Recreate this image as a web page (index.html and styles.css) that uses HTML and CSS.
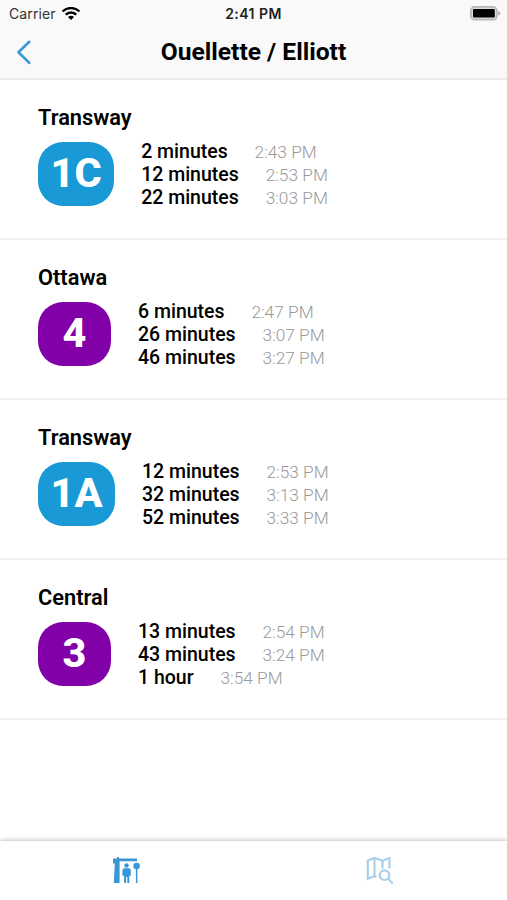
FILE: index.html
```
<!DOCTYPE html>
<html lang="en">
<head>
    <meta charset="UTF-8">
    <meta name="viewport" content="width=device-width, initial-scale=1.0">
    <title>Ouellette / Elliott</title>
    <link rel="stylesheet" href="styles.css">
</head>
<body>
    <header class="header">
        <div class="status-bar">
            <div class="carrier">
                <span>Carrier</span>
                <svg width="18" height="14" viewBox="0 0 18 14" fill="none" stroke="#000" stroke-width="2.4">
                    <path d="M.6 4.5C5.2 -.1 12.8 -.1 17.4 4.5"/>
                    <path d="M3.7 7.7C6.6 4.8 11.4 4.8 14.3 7.7"/>
                    <path d="M9 12.900L6 9.900C7.700 8.400 10.300 8.400 12 9.900Z" fill="#000" stroke="none"/>
                </svg>
            </div>
            <div class="clock">2:41 PM</div>
            <div class="battery">
                <svg width="31" height="15" viewBox="0 0 31 15">
                    <rect x=".9" y=".9" width="26" height="12.8" rx="3.8" fill="#ddd" stroke="#b8b8b8" stroke-width="1.8"/>
                    <rect x="3" y="3" width="21.8" height="8.6" rx="1" fill="#000"/>
                    <path d="M28.4 5v4.8q2-1 2-2.4t-2-2.4z" fill="#aaa"/>
                </svg>
            </div>
        </div>
        <div class="nav">
            <a class="back">
                <svg width="16" height="26" viewBox="0 0 16 26" fill="none" stroke="#3797d7" stroke-width="2.6" stroke-linecap="round" stroke-linejoin="round">
                    <path d="M13.3 2.8L2.5 13.3L13.3 23.9"/>
                </svg>
            </a>
            <h1>Ouellette / Elliott</h1>
        </div>
    </header>

    <main class="routes">
        <section class="route">
            <h2>Transway</h2>
            <div class="route-info">
                <div class="badge blue">1C</div>
                <ul class="times">
                    <li>2 minutes <span>2:43 PM</span></li>
                    <li>12 minutes <span>2:53 PM</span></li>
                    <li>22 minutes <span>3:03 PM</span></li>
                </ul>
            </div>
        </section>
        <section class="route">
            <h2>Ottawa</h2>
            <div class="route-info">
                <div class="badge purple">4</div>
                <ul class="times">
                    <li>6 minutes <span>2:47 PM</span></li>
                    <li>26 minutes <span>3:07 PM</span></li>
                    <li>46 minutes <span>3:27 PM</span></li>
                </ul>
            </div>
        </section>
        <section class="route">
            <h2>Transway</h2>
            <div class="route-info">
                <div class="badge blue">1A</div>
                <ul class="times">
                    <li>12 minutes <span>2:53 PM</span></li>
                    <li>32 minutes <span>3:13 PM</span></li>
                    <li>52 minutes <span>3:33 PM</span></li>
                </ul>
            </div>
        </section>
        <section class="route">
            <h2>Central</h2>
            <div class="route-info">
                <div class="badge purple">3</div>
                <ul class="times">
                    <li>13 minutes <span>2:54 PM</span></li>
                    <li>43 minutes <span>3:24 PM</span></li>
                    <li>1 hour <span>3:54 PM</span></li>
                </ul>
            </div>
        </section>
    </main>

    <footer class="tabs">
        <a class="tab">
            <!-- bus stop -->
            <svg width="28" height="28" viewBox="0 0 28 28" fill="#3797d7">
                <path d="M0 2.5h4V1h2v1.5h18v2.8H6.600V27H.8L1.8 7.5H0z"/>
                <circle cx="13.5" cy="9.5" r="2.2"/>
                <path d="M11.4 12.300h4.400q2 0 2 2v5.500h-1.500v7.200h-2v-6h-1.200v6h-2v-7.200H9.400v-5.500q0-2 2-2z"/>
                <circle cx="23.6" cy="10" r="3.3"/>
                <path d="M22.9 12h1.5v15h-1.5z"/>
            </svg>
        </a>
        <a class="tab">
            <!-- map search -->
            <svg width="28" height="28" viewBox="0 0 28 28" fill="none" stroke="#a9d0ea" stroke-width="2.2">
                <path d="M10.5 20.7L8.5 20.1L1.8 22.8V4.500L8.500 2L16.500 4.700L23.400 2V12.500M8.500 2V20.100M16.500 4.700V12.500"/>
                <circle cx="18.5" cy="19.2" r="4.8"/>
                <path d="M22 22.7L26.8 27.5"/>
            </svg>
        </a>
    </footer>
</body>
</html>
```

FILE: styles.css
```
* {
    box-sizing: border-box;
}
body {
    margin: 0;
    height: 100vh;
    display: flex;
    flex-direction: column;
    overflow: hidden;
    font-family: Roboto, sans-serif;
    color: #000;
    background-color: #fff;
}
h1, h2, ul {
    margin: 0;
    padding: 0;
}
svg {
    display: block;
}
.header {
    height: 80px;
    background-color: #f9f9f9;
    border-bottom: 2px solid #e9e9e9;
}
.status-bar {
    display: grid;
    grid-template-columns: 1fr auto 1fr;
    align-items: center;
    height: 27px;
    padding: 0 6px;
    font-family: Inter, sans-serif;
    font-size: 14px;
}
.carrier {
    display: flex;
    align-items: center;
    gap: 6px;
    padding-left: 3px;
    color: #333;
    letter-spacing: 0.1px;
}
.clock {
    font-weight: 600;
    letter-spacing: 0.45px;
    color: #222;
}
.battery {
    justify-self: end;
}
.nav {
    display: grid;
    grid-template-columns: 40px 1fr 40px;
    align-items: center;
    height: 50px;
}
.back {
    padding-left: 16px;
}
h1 {
    text-align: center;
    font-size: 24.6px;
    line-height: 28px;
    font-weight: 700;
}
.routes {
    flex: 1;
}
.route {
    height: 160px;
    padding: 23px 38px 0;
    border-bottom: 2px solid #f2f2f2;
}
h2 {
    font-size: 21.8px;
    line-height: 29px;
    font-weight: 600;
}
.route-info {
    display: flex;
    gap: 27px;
    margin-top: 10px;
}
.badge {
    display: flex;
    align-items: center;
    justify-content: center;
    min-width: 73px;
    height: 63.5px;
    padding: 0 12.5px 2px;
    border-radius: 25px;
    color: #fff;
    font-size: 41.5px;
    font-weight: 800;
}
.blue {
    background-color: #1999d5;
}
.purple {
    background-color: #8200a8;
}
.times {
    list-style: none;
    margin-top: -2px;
}
.times li {
    height: 23.2px;
    font-size: 19.5px;
    line-height: 23.2px;
    font-weight: 500;
}
.times span {
    margin-left: 22px;
    font-size: 17.3px;
    line-height: 1;
    font-weight: 300;
    color: #999;
}
.tabs {
    display: grid;
    grid-template-columns: 1fr 1fr;
    justify-items: center;
    height: 59px;
    padding-top: 15px;
    background-color: #fff;
    box-shadow: 0 -1px 4px rgba(0, 0, 0, 0.25);
}
```
